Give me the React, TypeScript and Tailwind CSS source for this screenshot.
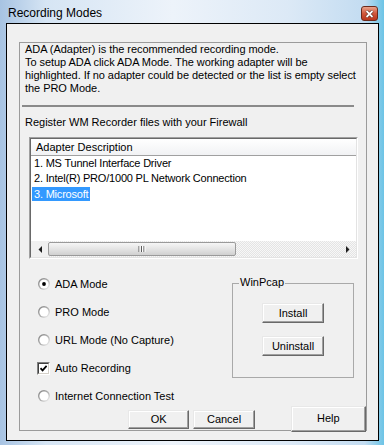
import type { ReactNode } from "react";

const font = { fontFamily: '"Liberation Sans", Arial, sans-serif' };

function Radio({ checked }: { checked?: boolean }) {
  return (
    <svg width="12" height="12" viewBox="0 0 12 12">
      <defs>
        <linearGradient id="radioRing" x1="0" y1="0" x2="1" y2="1">
          <stop offset="0" stopColor="#7c7c7c" />
          <stop offset="0.55" stopColor="#b4b4b4" />
          <stop offset="1" stopColor="#ffffff" />
        </linearGradient>
      </defs>
      <circle cx="6" cy="6" r="6" fill="url(#radioRing)" />
      <circle cx="6" cy="6" r="4.6" fill="#ffffff" />
      {checked && <circle cx="6" cy="6" r="1.9" fill="#000000" />}
    </svg>
  );
}

function CheckBox() {
  return (
    <div className="w-[13px] h-[13px] border border-t-[#808080] border-l-[#808080] border-r-white border-b-white">
      <div className="w-full h-full border border-t-[#404040] border-l-[#404040] border-r-[#d4d0c8] border-b-[#d4d0c8] bg-white flex items-center justify-center">
        <svg width="7" height="7" viewBox="0 0 7 7">
          <path d="M0.5 3.2 L2.6 5.4 L6.6 0.8" stroke="#000" strokeWidth="1.7" fill="none" />
        </svg>
      </div>
    </div>
  );
}

function Btn({ children, className }: { children: ReactNode; className: string }) {
  return (
    <div
      className={
        "flex items-center justify-center bg-[#f0f0f0] border border-t-[#e8e8e8] border-l-[#e8e8e8] border-r-[#696969] border-b-[#696969] shadow-[inset_-1px_-1px_0_#a0a0a0,inset_1px_1px_0_#ffffff] text-[11px] text-black " +
        className
      }
    >
      {children}
    </div>
  );
}

function Option({ label, checked, box }: { label: string; checked?: boolean; box?: boolean }) {
  return (
    <div className="h-[28px] flex items-center gap-[5px]">
      <div className="w-[13px] flex justify-center">{box ? <CheckBox /> : <Radio checked={checked} />}</div>
      <span className="text-[11px] leading-[13px] text-black">{label}</span>
    </div>
  );
}

export default function App() {
  return (
    <div
      style={font}
      className="w-[384px] h-[445px] flex flex-col overflow-hidden bg-[linear-gradient(to_right,#a7c3e2_0%,#d6e5f4_12%,#edf3fa_45%,#dce9f6_75%,#c3dcf1_95%,#6cc4e6_100%)]"
    >
      {/* title bar */}
      <div className="h-[23px] flex justify-between shrink-0">
        <div className="pl-[8px] pt-[5px] text-[12px] leading-[16px] text-black">Recording Modes</div>
        <div className="mt-[6px] mr-[6px] w-[17px] h-[15px] rounded-[3px] border border-[#6b2a1c] bg-[linear-gradient(#eaa38c,#d0583c_50%,#b8361c)] flex items-center justify-center">
          <svg width="9" height="8" viewBox="0 0 9 8">
            <path d="M1.5 1 L7.5 7 M7.5 1 L1.5 7" stroke="#4a1a10" strokeWidth="3" />
            <path d="M1.5 1 L7.5 7 M7.5 1 L1.5 7" stroke="#ffffff" strokeWidth="1.8" />
          </svg>
        </div>
      </div>

      {/* client area */}
      <div className="ml-[6px] w-[373px] h-[418px] border border-black bg-[#f0f0f0] pl-[12px] pr-[11px] pt-[18px] pb-[9px]">
        <div className="h-full border border-[#9b9b9b] flex flex-col">
          <div className="pl-[5px] text-[11px] leading-[13px] tracking-[-0.05px] text-black whitespace-nowrap">
            ADA (Adapter) is the recommended recording mode.
            <br />
            To setup ADA click ADA Mode. The working adapter will be
            <br />
            highlighted. If no adapter could be detected or the list is empty select
            <br />
            the PRO Mode.
          </div>

          <div className="mt-[10px] ml-[2px] w-[332px] h-[2px] bg-[#8a8a8a]" />

          <div className="mt-[9px] pl-[5px] text-[11px] leading-[13px] text-black whitespace-nowrap">
            Register WM Recorder files with your Firewall
          </div>

          {/* adapter list */}
          <div className="mt-[8px] ml-[9px] w-[329px] h-[122px] border border-t-[#a0a0a0] border-l-[#a0a0a0] border-r-white border-b-white">
            <div className="h-full border border-t-[#696969] border-l-[#696969] border-r-[#e3e3e3] border-b-[#e3e3e3] bg-white flex flex-col">
              <div className="h-[17px] shrink-0 border-b border-[#a0a0a0] bg-[linear-gradient(#ffffff,#f1f2f4)] pl-[5px] flex items-center text-[11px] text-black">
                Adapter Description
              </div>
              <div className="flex-1 text-[11px] tracking-[-0.2px] text-black whitespace-nowrap">
                <div className="h-[15px] flex items-center pl-[3px]">1. MS Tunnel Interface Driver</div>
                <div className="h-[15px] flex items-center pl-[3px]">2. Intel(R) PRO/1000 PL Network Connection</div>
                <div className="h-[15px] flex items-center">
                  <span className="ml-[1px] px-[2px] h-[14px] leading-[14px] bg-[#3399ff] text-white">3. Microsoft</span>
                </div>
              </div>
              {/* horizontal scrollbar */}
              <div className="h-[16px] shrink-0 flex bg-[repeating-conic-gradient(#e4e4e4_0%_25%,#f7f7f7_0%_50%)] bg-[length:2px_2px]">
                <div className="w-[17px] flex items-center justify-center bg-[#f0f0f0]">
                  <svg width="4" height="7" viewBox="0 0 4 7">
                    <path d="M4 0 L0.5 3.5 L4 7Z" fill="#1e1e1e" />
                  </svg>
                </div>
                <div className="w-[188px] my-[1px] rounded-[2px] border border-[#9a9a9a] bg-[linear-gradient(#f6f6f6,#e4e4e4_50%,#d0d0d0)] flex items-center justify-center">
                  <svg width="8" height="6" viewBox="0 0 8 6">
                    <path d="M1 0 V6 M3.5 0 V6 M6 0 V6" stroke="#5a5a5a" strokeWidth="1" />
                    <path d="M2 0 V6 M4.5 0 V6 M7 0 V6" stroke="#ffffff" strokeWidth="1" />
                  </svg>
                </div>
                <div className="flex-1" />
                <div className="w-[17px] flex items-center justify-center">
                  <svg width="4" height="7" viewBox="0 0 4 7">
                    <path d="M0 0 L3.5 3.5 L0 7Z" fill="#1e1e1e" />
                  </svg>
                </div>
              </div>
            </div>
          </div>

          {/* options and WinPcap */}
          <div className="mt-[11px] flex">
            <div className="pl-[17px] flex flex-col">
              <Option label="ADA Mode" checked />
              <Option label="PRO Mode" />
              <Option label="URL Mode (No Capture)" />
              <Option label="Auto Recording" box />
              <Option label="Internet Connection Test" />
            </div>
            <div className="ml-auto mr-[12px] mt-[13px] w-[122px] h-[95px] border border-[#a9a9a9] relative flex flex-col items-center pt-[19px] gap-[13px]">
              <span className="absolute -top-[8px] left-[6px] px-[1px] bg-[#f0f0f0] text-[11px] leading-[13px] text-black">
                WinPcap
              </span>
              <Btn className="w-[62px] h-[20px]">Install</Btn>
              <Btn className="w-[62px] h-[20px]">Uninstall</Btn>
            </div>
          </div>

          {/* dialog buttons */}
          <div className="-mt-[4px] flex items-end pl-[108px]">
            <Btn className="w-[62px] h-[19px]">OK</Btn>
            <Btn className="ml-[4px] w-[62px] h-[19px]">Cancel</Btn>
            <Btn className="relative z-10 ml-[36px] -mb-[3px] w-[76px] h-[26px] pb-[2px]">Help</Btn>
          </div>
        </div>
      </div>
    </div>
  );
}
